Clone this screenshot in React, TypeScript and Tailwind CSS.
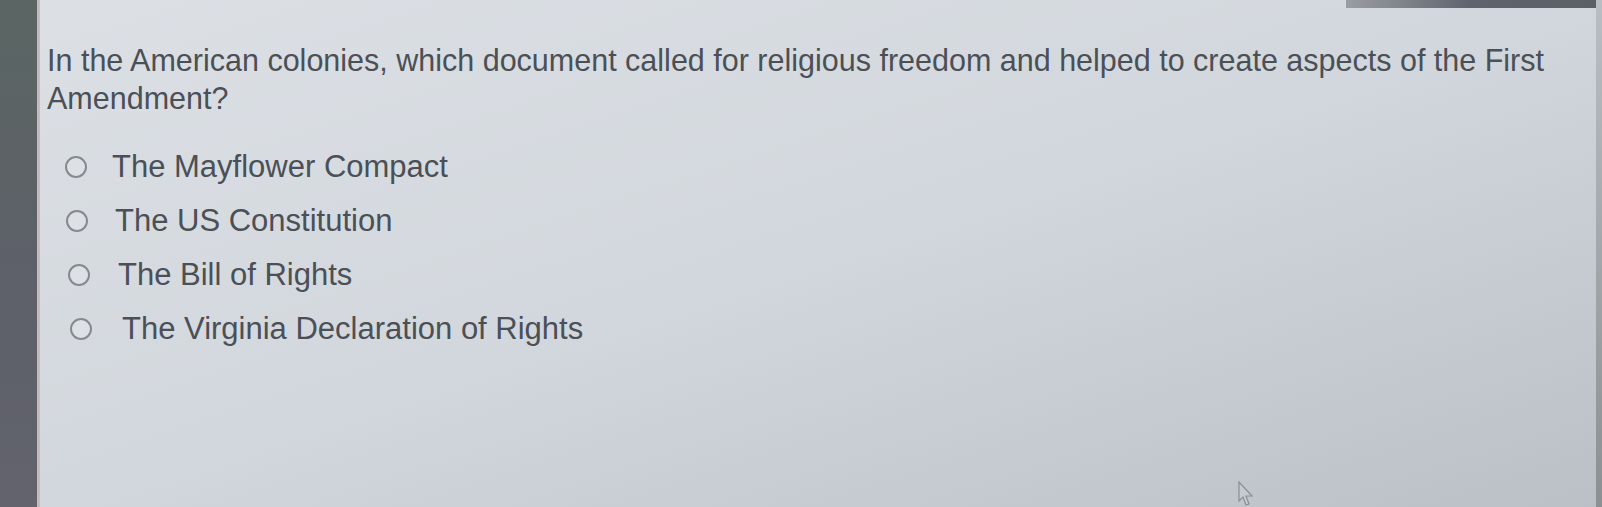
import React from "react";

const options = [
  { label: "The Mayflower Compact", shift: "pl-0 gap-[25px]" },
  { label: "The US Constitution", shift: "pl-[1px] gap-[27px]" },
  { label: "The Bill of Rights", shift: "pl-[3px] gap-[28px]" },
  { label: "The Virginia Declaration of Rights", shift: "pl-[5px] gap-[30px]" },
];

function Radio() {
  return <span className="size-[22px] shrink-0 rounded-full border-2 border-[#858a91] bg-[#dde1e6]" />;
}

export default function App() {
  return (
    <div className="flex h-[507px] w-[1602px] overflow-hidden bg-[#c9ced4] font-['Liberation_Sans',Arial,sans-serif]">
      <div className="w-[37px] shrink-0 bg-gradient-to-b from-[#5b6663] via-[#5d6068] to-[#62636d]" />
      <div className="w-[3px] shrink-0 bg-[#c9b8bd]" />
      <main className="relative flex flex-1 flex-col bg-gradient-to-br from-[#dce0e5] via-[#d2d7dd] to-[#bbc0c6]">
        <div className="flex h-[8px] shrink-0">
          <div className="flex-1" />
          <div className="w-[250px] bg-gradient-to-r from-[#9a9ea4] via-[#5f636b] to-[#5b5f66]" />
        </div>
        <div className="pl-[7px] pt-[33px] text-[#4b4f56]">
          <p className="text-[30.5px] leading-[38px]">
            In the American colonies, which document called for religious freedom and helped to create aspects of the First
            <br />
            Amendment?
          </p>
          <ul className="mt-[31px] flex flex-col gap-[16px] pl-[18px] text-[31px] leading-[38px]">
            {options.map((o) => (
              <li key={o.label} className={`flex items-center ${o.shift}`}>
                <Radio />
                <span>{o.label}</span>
              </li>
            ))}
          </ul>
        </div>
        <svg className="absolute left-[1198px] top-[481px]" width="16" height="26" viewBox="0 0 16 26">
          <path d="M1 1 L1 20 L5 16 L8 24 L11 23 L8 15 L14 15 Z" fill="#c6cbd1" stroke="#8a8e95" strokeWidth="1.2" />
        </svg>
      </main>
      <div className="w-[6px] shrink-0 bg-gradient-to-b from-[#b9bec4] to-[#8b9192]" />
    </div>
  );
}
